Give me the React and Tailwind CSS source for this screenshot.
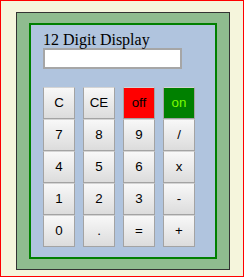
export default function App() {
  const rows = [
    ["C", "CE", "off", "on"],
    ["7", "8", "9", "/"],
    ["4", "5", "6", "x"],
    ["1", "2", "3", "-"],
    ["0", ".", "=", "+"],
  ];
  const btnBase =
    "w-[32px] h-[32px] border border-[#a3a3a3] border-t-[#d4d4d4] text-[13.333px] flex items-center justify-center";
  const style = (k) => {
    if (k === "off") return btnBase + " bg-[#ff0000] text-black";
    if (k === "on") return btnBase + " bg-[#008000] text-[#7cfc00]";
    return btnBase + " bg-gradient-to-b from-[#f8f8f8] to-[#dcdcdc] text-black";
  };
  return (
    <div className="w-[244px] h-[277px] border border-[#ff0000] bg-[#f5f5dc] pl-[15px] pt-[11px] [font-family:'Liberation_Sans',Arial,sans-serif]">
      <div className="w-[214px] h-[258px] border border-[#333333] bg-[#8fbc8f] pl-[12px] pt-[10px]">
        <div className="w-[188px] h-[236px] border-2 border-[#008000] bg-[#b0c4de] pl-[12px] pt-[6px]">
          <div className="h-[17px] leading-[17px] text-[16px] text-black [font-family:'Liberation_Serif','Times_New_Roman',serif]">
            12 Digit Display
          </div>
          <div className="w-[139px] h-[21px] border-2 border-[#a6a6a6] bg-white"></div>
          <div className="mt-[18px] grid grid-cols-[repeat(4,32px)] gap-x-[8px]">
            {rows.flat().map((k, i) => (
              <button key={i} className={style(k)}>
                {k}
              </button>
            ))}
          </div>
        </div>
      </div>
    </div>
  );
}
